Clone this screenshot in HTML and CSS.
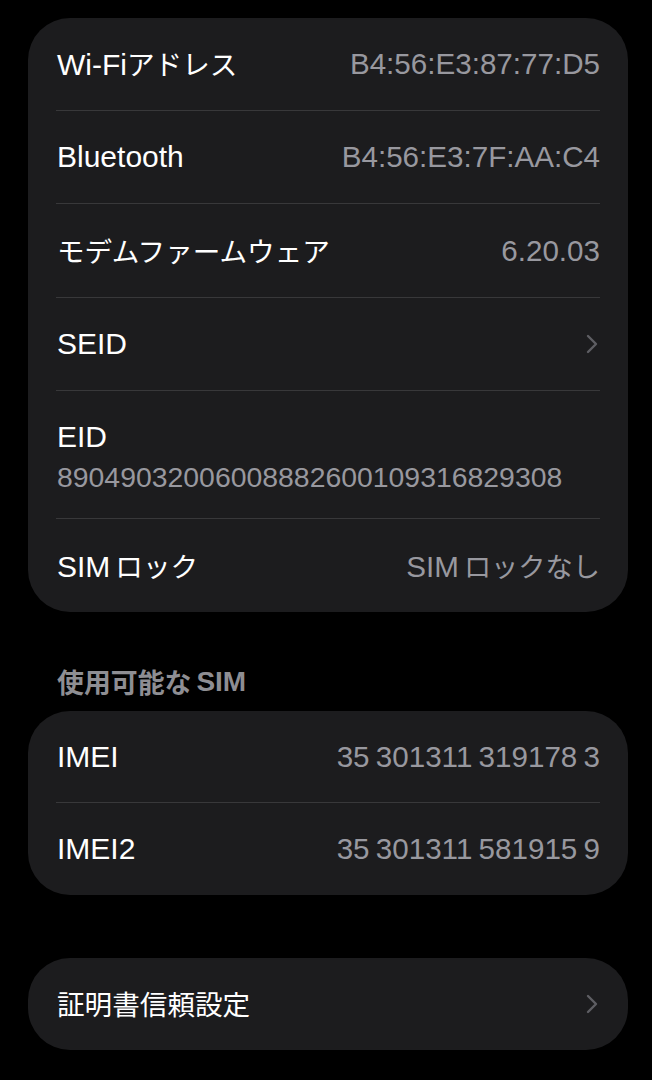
FILE: index.html
```html
<!DOCTYPE html>
<html lang="ja">
<head>
<meta charset="utf-8">
<title>情報</title>
<link rel="stylesheet" href="styles.css">
</head>
<body>
<main class="page">
  <section class="card">
    <div class="row">
      <span class="label">Wi-Fi<span class="ja">アドレス</span></span>
      <span class="value">B4:56:E3:87:77:D5</span>
    </div>
    <div class="row">
      <span class="label">Bluetooth</span>
      <span class="value">B4:56:E3:7F:AA:C4</span>
    </div>
    <div class="row row-tall">
      <span class="label"><span class="ja">モデムファームウェア</span></span>
      <span class="value">6.20.03</span>
    </div>
    <div class="row">
      <span class="label">SEID</span>
      <svg class="chevron" viewBox="0 0 12 20" width="12" height="20"><polyline points="2,2 10,10 2,18" fill="none" stroke="#5e5e63" stroke-width="2.4" stroke-linecap="round" stroke-linejoin="round"/></svg>
    </div>
    <div class="row row-stack">
      <span class="label">EID</span>
      <span class="value value-long">89049032006008882600109316829308</span>
    </div>
    <div class="row">
      <span class="label">SIM<span class="ja ja-gap">ロック</span></span>
      <span class="value">SIM<span class="ja ja-gap">ロックなし</span></span>
    </div>
  </section>

  <h2 class="section-title"><span class="ja">使用可能な</span><span class="ja-gap">SIM</span></h2>
  <section class="card card-compact">
    <div class="row">
      <span class="label">IMEI</span>
      <span class="value value-spaced">35 301311 319178 3</span>
    </div>
    <div class="row">
      <span class="label">IMEI2</span>
      <span class="value value-spaced">35 301311 581915 9</span>
    </div>
  </section>

  <section class="card card-compact card-spaced">
    <div class="row">
      <span class="label"><span class="ja">証明書信頼設定</span></span>
      <svg class="chevron" viewBox="0 0 12 20" width="12" height="20"><polyline points="2,2 10,10 2,18" fill="none" stroke="#5e5e63" stroke-width="2.4" stroke-linecap="round" stroke-linejoin="round"/></svg>
    </div>
  </section>
</main>
</body>
</html>
```

FILE: styles.css
```css
* {
  box-sizing: border-box;
}

html, body {
  margin: 0;
  padding: 0;
  background: #000;
}

body {
  font-family: "Liberation Sans", "Noto Sans CJK JP", sans-serif;
  font-size: 30px;
  color: #fff;
  width: 652px;
  height: 1080px;
  overflow: hidden;
}

.page {
  padding: 18px 24px 0 28px;
  display: flex;
  flex-direction: column;
}

.card {
  background: #1c1c1e;
  border-radius: 42px;
  padding-left: 28px;
  padding-right: 28px;
  display: flex;
  flex-direction: column;
}

.card-spaced {
  margin-top: 63px;
}

.row {
  display: flex;
  align-items: center;
  justify-content: space-between;
  height: 93px;
  border-bottom: 1px solid #38383a;
  padding-left: 1px;
}

.row:last-child {
  border-bottom: none;
}

.row-tall {
  height: 94px;
}

.card-compact .row {
  height: 92px;
}

.row-stack {
  height: 128px;
  flex-direction: column;
  align-items: flex-start;
  justify-content: flex-start;
  padding-top: 29px;
}

.label {
  line-height: 34px;
  white-space: nowrap;
}

.value {
  color: #98989f;
  font-size: 29.6px;
  line-height: 34px;
  white-space: nowrap;
}

.value-spaced {
  word-spacing: -2px;
}

.ja {
  font-family: "Noto Sans CJK JP", sans-serif;
  font-size: 0.92em;
}

.ja-gap {
  margin-left: 5px;
}

.value-long {
  font-size: 28.4px;
  line-height: 40px;
  margin-top: 3px;
}

.chevron {
  display: block;
  margin-right: 2px;
}

.section-title {
  margin: 0;
  padding: 53px 0 12px 29px;
  display: flex;
  align-items: center;
  font-size: 28px;
  font-weight: 700;
  line-height: 34px;
  color: #8e8e93;
}

.section-title .ja {
  font-size: 0.96em;
}
```
